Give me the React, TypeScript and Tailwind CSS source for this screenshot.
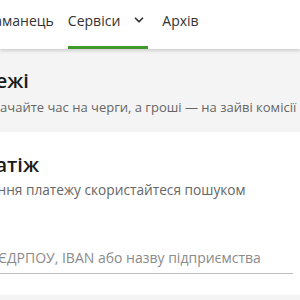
import { ChevronDown } from "lucide-react";

export default function App() {
    return (
        <div className="w-[300px] h-[300px] overflow-hidden bg-white font-['Open_Sans',sans-serif]">
            <header className="relative z-10 h-[49px] bg-white shadow-[0_2px_3px_rgba(0,0,0,0.15)]">
                <nav className="flex h-full items-stretch -ml-[13px] text-[14px] text-[#333]">
                    <a className="flex items-center pb-[9px]">Гаманець</a>
                    <div className="ml-[14px] flex items-center gap-[12px] border-b-[3px] border-[#3f9a2c] pb-[6px] pr-[2px]">
                        <span>Сервіси</span>
                        <ChevronDown className="w-[14px] h-[14px]" strokeWidth={3} />
                    </div>
                    <a className="ml-[14px] flex items-center pb-[9px]">Архів</a>
                </nav>
            </header>

            <section className="bg-[#f4f4f4] h-[83px] pt-[19px]">
                <h1 className="-ml-[53px] text-[20px] font-semibold text-[#1a1a1a] leading-[26px]">Платежі</h1>
                <p className="-ml-[50px] mt-[4px] text-[13px] text-[#666] whitespace-nowrap">
                    Не витрачайте час на черги, а гроші — на зайві комісії
                </p>
            </section>

            <section className="bg-white h-[163px] pt-[20px]">
                <h2 className="-ml-[101px] text-[20px] font-semibold text-[#1a1a1a] leading-[26px]">Новий платіж</h2>
                <p className="-ml-[76px] mt-[2px] text-[13.7px] text-[#666] whitespace-nowrap">
                    Для створення платежу скористайтеся пошуком
                </p>
                <div className="mt-[44px] mr-[7px] border-b border-[#bdbdbd] pb-[4px]">
                    <input
                        className="-ml-[57px] w-[350px] bg-transparent text-[14px] outline-none placeholder:text-[#8a8a8a]"
                        placeholder="Введіть ЄДРПОУ, IBAN або назву підприємства"
                    />
                </div>
            </section>

            <section className="bg-[#f4f4f4] h-[20px]" />
        </div>
    );
}
